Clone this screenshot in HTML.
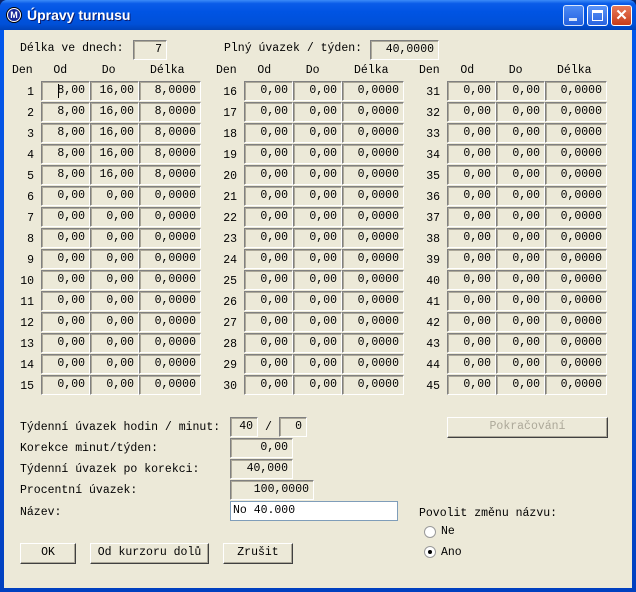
<!DOCTYPE html>
<html><head><meta charset="utf-8">
<style>
*{margin:0;padding:0;box-sizing:border-box}
body{width:636px;height:592px;overflow:hidden;background:#0a246a;font-family:"Liberation Mono","Courier New",monospace;font-size:11.5px;color:#000;position:relative}
.win{position:absolute;left:0;top:0;width:636px;height:592px;background:linear-gradient(#0058ee,#0a4fd8 50%,#0040c0);border-radius:7px 7px 0 0}
.title{position:absolute;left:0;top:0;width:636px;height:30px;border-radius:7px 7px 0 0;background:linear-gradient(#3c8cf8 0,#0a5ce8 12%,#0054e3 40%,#0050d8 80%,#0042b8 100%)}
.ttext{position:absolute;left:27px;top:7px;color:#fff;font:bold 14px "Liberation Sans",sans-serif;text-shadow:1px 1px #0a1a6a}
.ico{position:absolute;left:6px;top:7px;width:16px;height:16px;border-radius:50%;background:#fff;border:1px solid #000}
.ico:after{content:"M";position:absolute;left:1px;top:1px;width:12px;height:12px;border-radius:50%;background:#1a2a9a;color:#fff;font:bold 9px "Liberation Sans",sans-serif;text-align:center;line-height:12px}
.tb{position:absolute;top:5px;width:21px;height:21px;border:1px solid #fff;border-radius:3px;background:linear-gradient(#5a94f8,#2a64e0)}
.client{position:absolute;left:4px;top:30px;width:628px;height:558px;background:#ece9d8}
.a{position:absolute;white-space:pre;line-height:14px}
.b{position:absolute;height:20px;border:1px solid;border-color:#808080 #fff #fff #808080;box-shadow:inset 1px 1px #aca899;text-align:right;padding-right:4px;line-height:17px;white-space:pre}
.btn{position:absolute;height:21px;border:1px solid;border-color:#fff #404040 #404040 #fff;box-shadow:inset -1px -1px #aca899;text-align:center;line-height:18px;white-space:pre}
.n{text-align:right;width:24px}
</style></head><body>
<div class="win"></div>
<div class="title"></div>
<div class="ico"></div>
<div class="ttext">Úpravy turnusu</div>
<div class="tb" style="left:563px;opacity:.85"><div style="position:absolute;left:5px;top:12px;width:8px;height:3px;background:#fff"></div></div>
<div class="tb" style="left:587px"><div style="position:absolute;left:4px;top:4px;width:11px;height:11px;border:1px solid #fff;border-top-width:3px"></div></div>
<div class="tb" style="left:611px;background:linear-gradient(#e87a5a,#c83c18);color:#fff;font:bold 15px 'Liberation Sans',sans-serif;text-align:center;line-height:19px">✕</div>
<div class="client"></div>

<div class="a" style="left:20px;top:42px">Délka ve dnech:</div>
<div class="b" style="left:133px;top:40px;width:34px">7</div>
<div class="a" style="left:224px;top:42px">Plný úvazek / týden:</div>
<div class="b" style="left:370px;top:40px;width:69px">40,0000</div>

<div class="a" style="left:12px;top:64px">Den   Od     Do     Délka</div>
<div class="a" style="left:216px;top:64px">Den   Od     Do     Délka</div>
<div class="a" style="left:419px;top:64px">Den   Od     Do     Délka</div>

<div id="g"></div>
<script>
var h="";
for(var c=0;c<3;c++){var o=[0,203,406][c];
for(var r=0;r<15;r++){var t=81+r*21,d=c*15+r+1;
var od="0,00",dd="0,00",dl="0,0000";
if(d<=5){od="8,00";dd="16,00";dl="8,0000";}
h+='<div class="a n" style="left:'+(o+10)+'px;top:'+(t+5)+'px">'+d+'</div>';
h+='<div class="b" style="left:'+(o+41)+'px;top:'+t+'px;width:49px">'+od+'</div>';
h+='<div class="b" style="left:'+(o+90)+'px;top:'+t+'px;width:49px">'+dd+'</div>';
h+='<div class="b" style="left:'+(o+139)+'px;top:'+t+'px;width:62px">'+dl+'</div>';
}}
document.getElementById("g").innerHTML=h;
</script>
<div style="position:absolute;left:58px;top:84px;width:1px;height:14px;background:#000"></div>

<div class="a" style="left:20px;top:421px">Týdenní úvazek hodin / minut:</div>
<div class="b" style="left:230px;top:417px;width:28px">40</div>
<div class="a" style="left:265px;top:421px">/</div>
<div class="b" style="left:279px;top:417px;width:28px">0</div>
<div class="a" style="left:20px;top:442px">Korekce minut/týden:</div>
<div class="b" style="left:230px;top:438px;width:63px">0,00</div>
<div class="a" style="left:20px;top:463px">Týdenní úvazek po korekci:</div>
<div class="b" style="left:230px;top:459px;width:63px">40,000</div>
<div class="a" style="left:20px;top:484px">Procentní úvazek:</div>
<div class="b" style="left:230px;top:480px;width:84px">100,0000</div>
<div class="a" style="left:20px;top:506px">Název:</div>
<div class="b" style="left:230px;top:501px;width:168px;background:#fff;text-align:left;padding-left:2px;border-color:#7f9db9;box-shadow:none">No 40.000</div>

<div class="btn" style="left:20px;top:543px;width:56px">OK</div>
<div class="btn" style="left:90px;top:543px;width:119px">Od kurzoru dolů</div>
<div class="btn" style="left:223px;top:543px;width:70px">Zrušit</div>
<div class="btn" style="left:447px;top:417px;width:161px;color:#aca899">Pokračování</div>

<div class="a" style="left:419px;top:507px">Povolit změnu názvu:</div>
<div style="position:absolute;left:424px;top:526px;width:12px;height:12px;border-radius:50%;background:#fff;border:1px solid #9a9a9a"></div>
<div class="a" style="left:441px;top:525px">Ne</div>
<div style="position:absolute;left:424px;top:546px;width:12px;height:12px;border-radius:50%;background:#fff;border:1px solid #9a9a9a"><div style="position:absolute;left:3px;top:3px;width:4px;height:4px;border-radius:50%;background:#000"></div></div>
<div class="a" style="left:441px;top:546px">Ano</div>
</body></html>
